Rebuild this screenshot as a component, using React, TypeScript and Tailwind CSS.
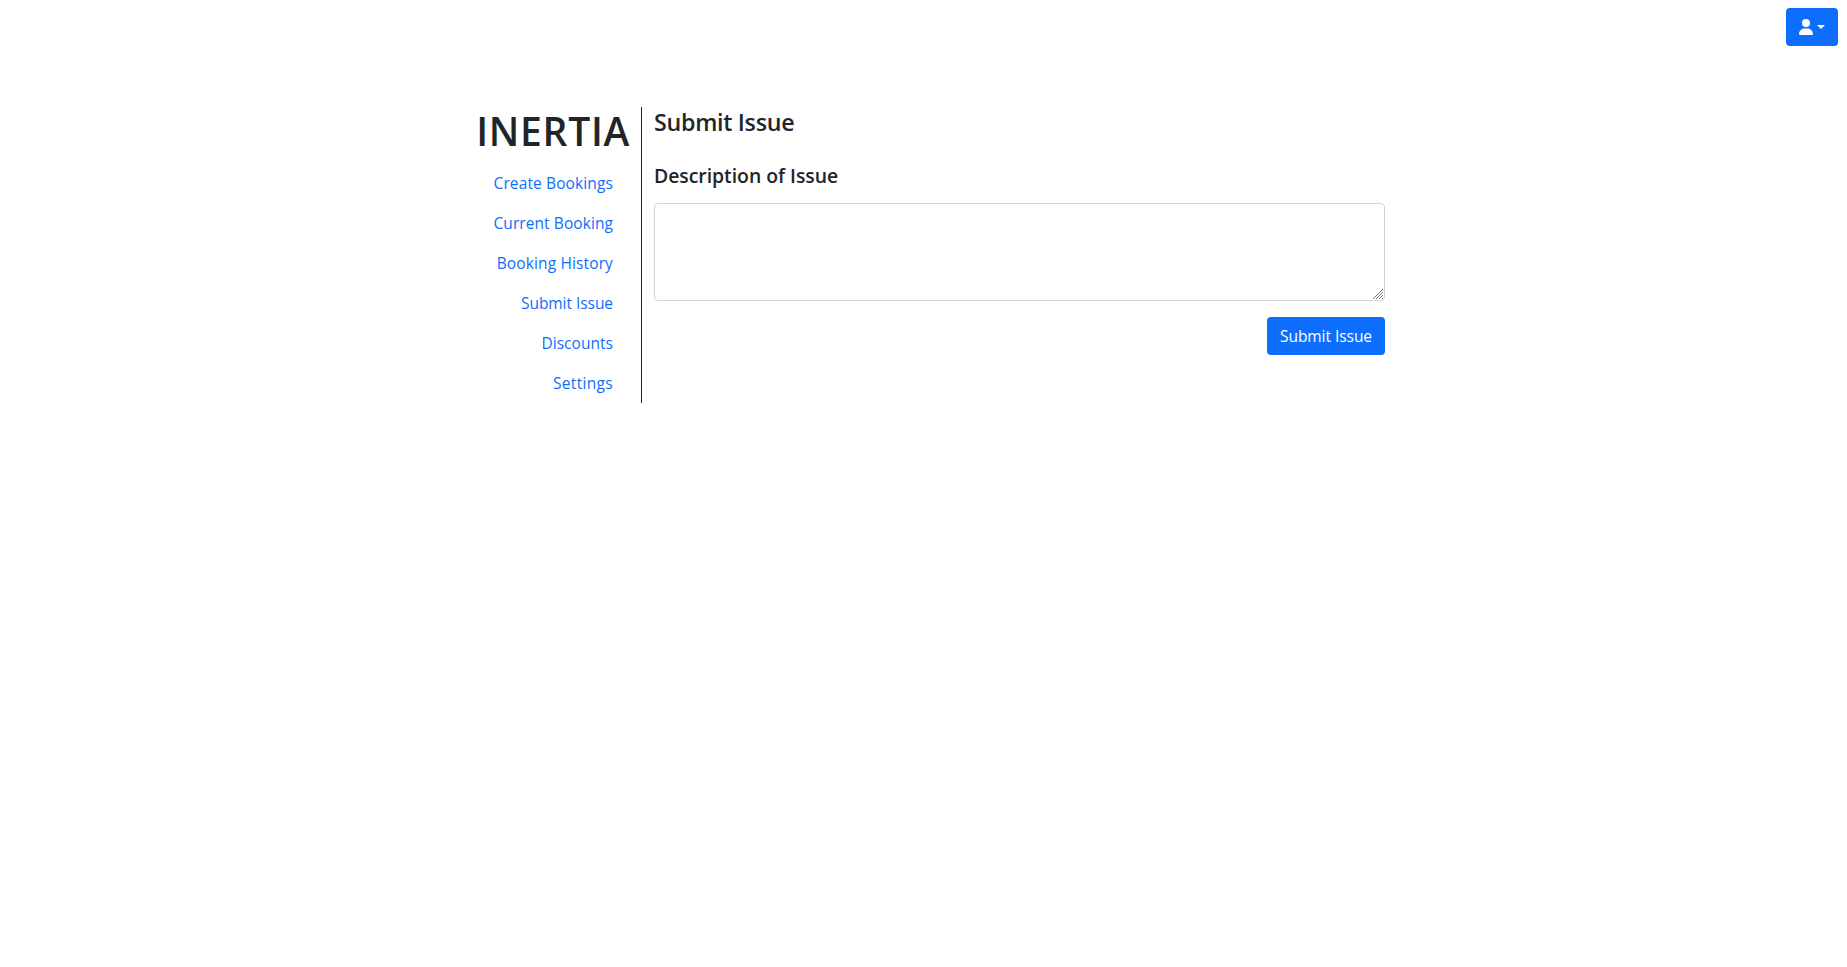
import { FaUser } from "react-icons/fa6";

const links: { label: string; className: string }[] = [
  { label: "Create Bookings", className: "tracking-[0.12px]" },
  { label: "Current Booking", className: "tracking-[0.08px]" },
  { label: "Booking History", className: "tracking-[0.13px]" },
  { label: "Submit Issue", className: "tracking-[-0.05px]" },
  { label: "Discounts", className: "tracking-[0.04px]" },
  { label: "Settings", className: "tracking-[0.32px]" },
];

function UserMenuButton() {
  return (
    <button
      type="button"
      aria-label="Account"
      className="flex h-[38px] items-center rounded bg-[#0d6efd] px-[13px] text-white"
    >
      <FaUser className="h-4 w-3.5" />
      <span className="ml-1 border-x-4 border-t-4 border-x-transparent border-t-white" />
    </button>
  );
}

function Sidebar() {
  return (
    <nav className="flex w-[177px] shrink-0 flex-col items-end border-r border-[#212529] pr-3">
      <h1 className="-mr-px mb-2 text-[39px] leading-[48px] font-semibold tracking-[0.7px] whitespace-nowrap">
        INERTIA
      </h1>
      {links.map((link) => (
        <a
          key={link.label}
          href="#"
          className={`px-4 py-2 text-[15.5px] leading-6 whitespace-nowrap text-[#0d6efd] ${link.className}`}
        >
          {link.label}
        </a>
      ))}
    </nav>
  );
}

function ResizeGrip() {
  return (
    <svg
      viewBox="0 0 10 10"
      className="pointer-events-none absolute right-0.5 bottom-0.5 size-2.5"
      fill="none"
      stroke="#777"
      strokeWidth="1"
    >
      <path d="M0 10 10 0M3 10l7-7M6 10l4-4M9 10l1-1" />
    </svg>
  );
}

function IssueForm() {
  return (
    <main className="flex w-[755px] flex-col px-3">
      <h4 className="pt-px text-[23.25px] leading-[29px] font-semibold tracking-[-0.3px]">Submit Issue</h4>
      <h5 className="mt-[27px] text-[19.4px] leading-6 font-semibold tracking-[-0.03px]">Description of Issue</h5>
      <div className="relative mt-[15px]">
        <textarea
          aria-label="Description of Issue"
          className="block h-[98px] w-full resize-none rounded border border-[#ced4da] bg-white px-3 py-1.5 outline-none"
        />
        <ResizeGrip />
      </div>
      <button
        type="button"
        className="mt-4 h-[38px] w-[118px] self-end rounded bg-[#0d6efd] text-[15.5px] leading-6 tracking-[-0.05px] whitespace-nowrap text-white"
      >
        Submit Issue
      </button>
    </main>
  );
}

export default function App() {
  return (
    <div className="min-h-screen bg-white font-['Open_Sans',sans-serif] text-[#212529]">
      <header className="flex justify-end pt-2 pr-[9px]">
        <UserMenuButton />
      </header>
      <div className="mt-[61px] ml-[465px] flex h-[296px]">
        <Sidebar />
        <IssueForm />
      </div>
    </div>
  );
}
